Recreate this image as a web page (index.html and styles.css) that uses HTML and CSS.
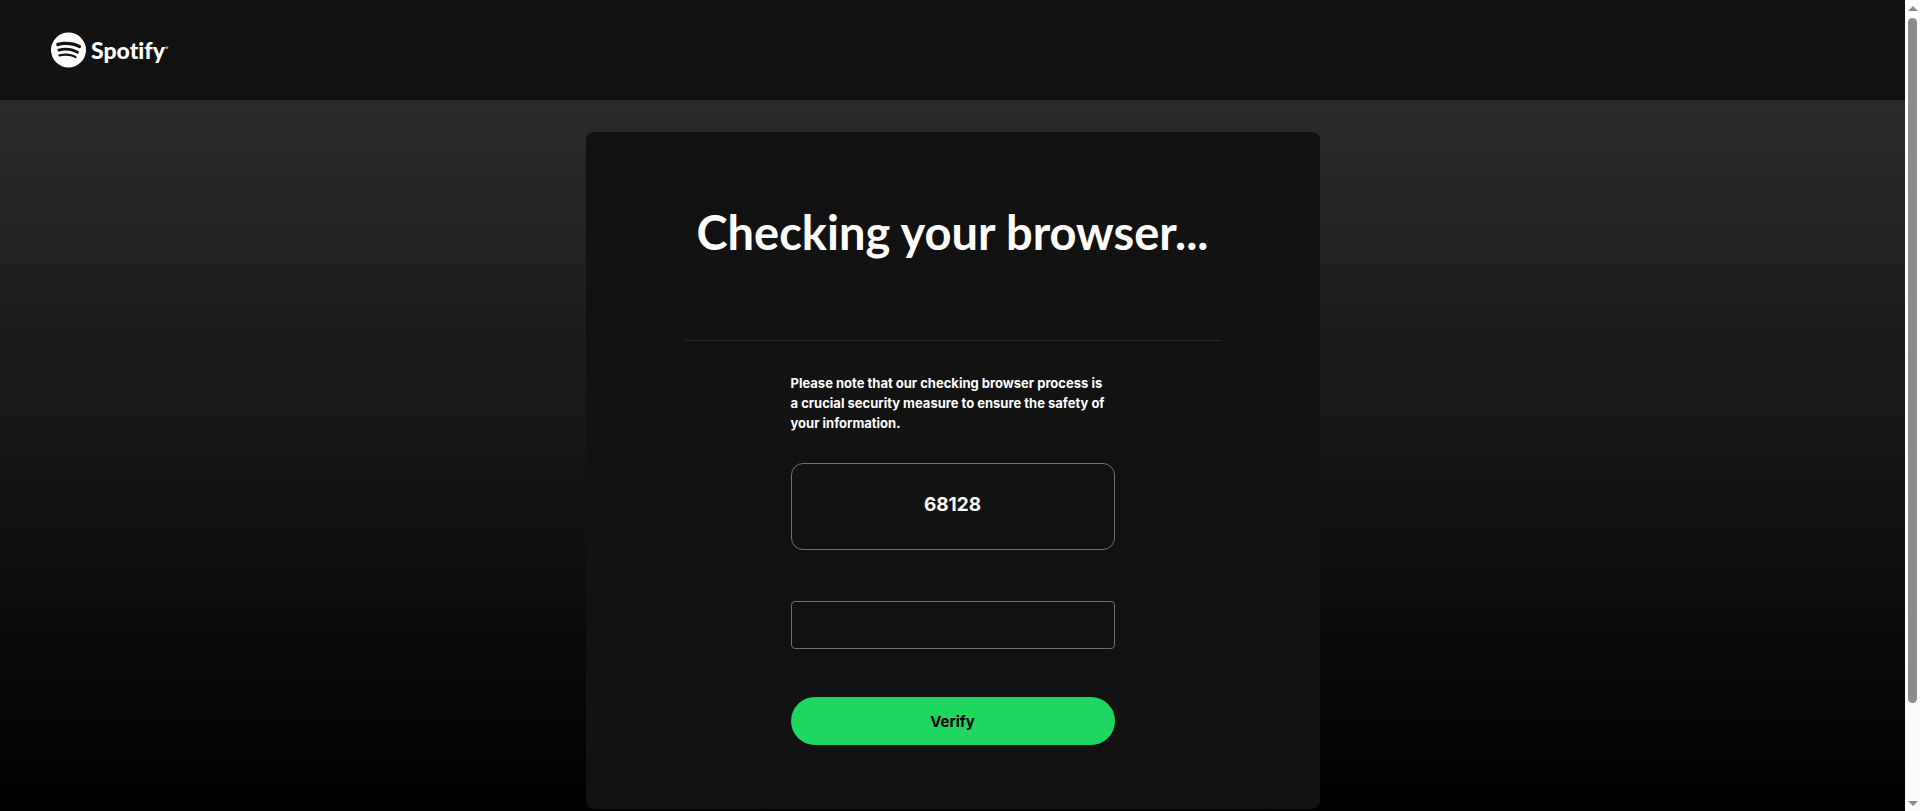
FILE: index.html
```html
<!DOCTYPE html>
<html lang="en">
<head>
  <meta charset="UTF-8">
  <title>Checking your browser</title>
  <meta name="viewport" content="width=device-width, initial-scale=1.0">
  <link rel="stylesheet" href="styles.css">
</head>
<body>
  <div class="page">
    <header class="header">
      <a href="#" class="logo" aria-label="Spotify">
        <svg class="logo-mark" viewBox="0 0 168 168" aria-hidden="true">
          <path fill="#fff" d="M84 0a84 84 0 1 0 0 168A84 84 0 0 0 84 0zm38.500 121.200a5.200 5.200 0 0 1-7.200 1.700c-19.700-12-44.500-14.800-73.800-8.100a5.200 5.200 0 1 1-2.300-10.200c32-7.300 59.500-4.200 81.600 9.400a5.200 5.200 0 0 1 1.700 7.200zm10.300-22.900a6.600 6.600 0 0 1-9 2.200c-22.600-13.900-57-17.900-83.700-9.800a6.600 6.600 0 1 1-3.800-12.500c30.500-9.300 68.400-4.800 94.300 11.100a6.600 6.600 0 0 1 2.200 9zm.9-23.900C106.600 58.300 61.900 56.800 36.100 64.700a7.900 7.900 0 1 1-4.600-15c29.700-9 79-7.300 110.200 11.200a7.900 7.900 0 0 1-8 13.500z"/>
        </svg>
        <span class="logo-text">Spotify</span><span class="logo-reg">®</span>
      </a>
    </header>
    <main class="main">
      <section class="card">
        <h1 class="title">Checking your browser...</h1>
        <hr class="divider">
        <form class="verify-form">
          <label class="note" for="code">Please note that our checking browser process is a crucial security measure to ensure the safety of your information.</label>
          <div class="code-box">68128</div>
          <input type="text" id="code" class="code-input" autocomplete="off">
          <button type="button" class="verify-btn">Verify</button>
        </form>
      </section>
    </main>
  </div>
  <div class="scrollbar" aria-hidden="true">
    <span class="arrow arrow-up"></span>
    <span class="thumb"></span>
    <span class="arrow arrow-down"></span>
  </div>
</body>
</html>
```

FILE: styles.css
```css
* {
  box-sizing: border-box;
}
body {
  margin: 0;
  min-height: 100vh;
  display: flex;
  background: #000;
  color: #fff;
  font-family: Inter, 'Liberation Sans', sans-serif;
}
.page {
  flex: 1;
  display: flex;
  flex-direction: column;
}
.header {
  height: 100px;
  padding: 0 51px;
  display: flex;
  align-items: center;
  background: #121212;
}
.logo {
  display: flex;
  align-items: center;
  color: #fff;
  text-decoration: none;
}
.logo-mark {
  width: 35px;
  height: 36px;
  margin-right: 5px;
}
.logo-text {
  font-family: Lato, sans-serif;
  font-size: 23px;
  font-weight: 900;
  font-variant-ligatures: none;
  line-height: 36px;
}
.logo-reg {
  padding-bottom: 4px;
  font-size: 5px;
}
.main {
  flex: 1;
  padding: 32px 16px 3px;
  background: linear-gradient(#2a2a2a, #000);
}
.card {
  max-width: 734px;
  margin: 0 auto;
  padding: 64px 99px;
  border-radius: 8px;
  background: #121212;
}
.title {
  margin: 0;
  font-family: Lato, sans-serif;
  font-size: 47px;
  font-weight: 700;
  line-height: 72px;
  text-align: center;
  white-space: nowrap;
}
.divider {
  margin: 72px 0 32px;
  border: 0;
  border-top: 1px solid #292929;
}
.verify-form {
  max-width: 324px;
  margin: 0 auto;
  display: flex;
  flex-direction: column;
}
.note {
  padding-right: 4px;
  font-size: 13px;
  font-weight: 700;
  line-height: 20px;
}
.code-box {
  height: 87px;
  margin: 30px 0 51px;
  padding-bottom: 4px;
  display: flex;
  align-items: center;
  justify-content: center;
  border: 1px solid #727272;
  border-radius: 12px;
  font-size: 19px;
  font-weight: 700;
}
.code-input {
  height: 48px;
  padding: 12px;
  border: 1px solid #727272;
  border-radius: 4px;
  background: #121212;
  color: #fff;
  font: inherit;
}
.verify-btn {
  height: 48px;
  margin-top: 48px;
  border: 0;
  border-radius: 24px;
  background: #1ed760;
  color: #000;
  font-family: inherit;
  font-size: 15px;
  font-weight: 700;
  cursor: pointer;
}
.verify-btn:hover {
  background: #1fdf64;
}
.scrollbar {
  width: 15px;
  padding: 6px 0;
  display: flex;
  flex-direction: column;
  align-items: center;
  background: #fcfcfc;
}
.scrollbar::after {
  content: "";
  flex: 1;
  order: 1;
}
.arrow {
  border: 0 solid transparent;
  border-width: 0 5px;
}
.arrow-up {
  border-bottom: 5px solid #8b8b8b;
}
.arrow-down {
  order: 2;
  border-top: 5px solid #8b8b8b;
}
.thumb {
  width: 9px;
  flex: 7;
  margin-top: 7px;
  border-radius: 5px;
  background: #8b8b8b;
}
```
